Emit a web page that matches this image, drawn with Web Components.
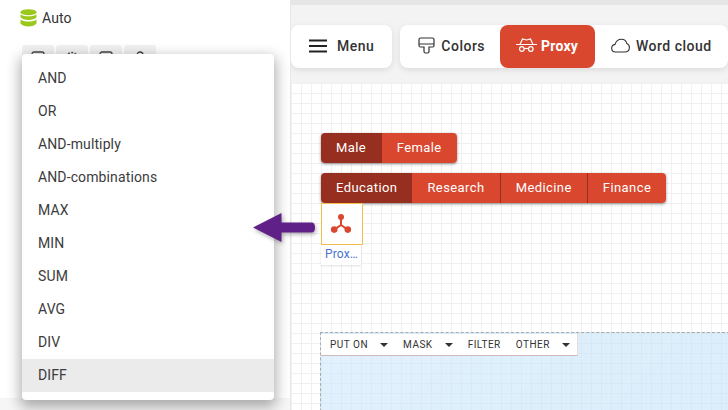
<!DOCTYPE html>
<html>
<head>
<meta charset="utf-8">
<style>
    html, body { margin: 0; padding: 0; width: 728px; height: 410px; overflow: hidden; background: #fff; }
    body { font-family: Roboto, "Liberation Sans", sans-serif; }
    app-shell { width: 728px; height: 410px; }
</style>
</head>
<body>
<app-shell>
    <app-sidebar slot="side"></app-sidebar>
    <app-toolbar slot="top">
        <tool-card>
            <tool-button gap="9" pad="0 18px 2px 17px">
                <svg slot="icon" width="20" height="16" viewBox="0 0 20 16"><path d="M1 2.500h18M1 8h18M1 13.500h18" fill="none" stroke="#222" stroke-width="2"/></svg>
                Menu
            </tool-button>
        </tool-card>
        <tool-card>
            <tool-button gap="6" pad="0 15px 2px 18px">
                <svg slot="icon" width="17" height="17" viewBox="0 0 17 17"><path d="M1 2.500q0-1.500 1.500-1.500h12q1.500 0 1.500 1.500v6q0 1.500-1.500 1.500H11v4.500q0 1.500-1.500 1.500h-2q-1.500 0-1.500-1.500V10H2.500Q1 10 1 8.500zM1 7h15" fill="none" stroke="#333" stroke-width="1.200"/></svg>
                Colors
            </tool-button>
            <tool-button active gap="4" pad="0 17px 2px 16px">
                <svg slot="icon" width="21" height="18" viewBox="0 0 21 18"><path d="M0 7.500h21M4 7.500 6.500 2 10.500 3 14.500 2 17 7.500" fill="none" stroke="#fff" stroke-width="1.200"/><circle cx="5.800" cy="12" r="2.300" fill="none" stroke="#fff" stroke-width="1.200"/><circle cx="14.800" cy="12" r="2.300" fill="none" stroke="#fff" stroke-width="1.200"/><path d="M8.100 11.500h4.400" stroke="#fff" stroke-width="1.200"/></svg>
                Proxy
            </tool-button>
            <tool-button gap="6" pad="0 16px 2px">
                <svg slot="icon" width="19" height="15" viewBox="0 0 19 15"><path d="M4.500 14Q.7 14 .7 10.200 .7 7 4 6.400 5.500 1.200 10.500 1.200 15 1.200 15.800 5.500 18.400 6.500 18.400 9.500 18.400 14 13.500 14z" fill="none" stroke="#333" stroke-width="1.100"/></svg>
                Word cloud
            </tool-button>
        </tool-card>
    </app-toolbar>
    <app-canvas slot="main">
        <seg-group>
            <seg-item on wide>Male</seg-item>
            <seg-item wide>Female</seg-item>
        </seg-group>
        <seg-group>
            <seg-item on>Education</seg-item>
            <seg-item>Research</seg-item>
            <seg-item line>Medicine</seg-item>
            <seg-item line>Finance</seg-item>
        </seg-group>
        <proxy-node>Prox…</proxy-node>
        <drop-zone>
            <zone-tab arrow>PUT ON</zone-tab>
            <zone-tab arrow>MASK</zone-tab>
            <zone-tab>FILTER</zone-tab>
            <zone-tab arrow>OTHER</zone-tab>
        </drop-zone>
    </app-canvas>
    <pop-menu slot="over">
        <menu-row>AND</menu-row>
        <menu-row>OR</menu-row>
        <menu-row>AND-multiply</menu-row>
        <menu-row>AND-combinations</menu-row>
        <menu-row>MAX</menu-row>
        <menu-row>MIN</menu-row>
        <menu-row>SUM</menu-row>
        <menu-row>AVG</menu-row>
        <menu-row>DIV</menu-row>
        <menu-row hover>DIFF</menu-row>
    </pop-menu>
    <svg slot="over" style="position:absolute;left:252px;top:212px;filter:drop-shadow(1px 2px 2px rgba(0,0,0,.3))" width="64" height="31" viewBox="0 0 64 31">
        <path d="M1 15.500 29.500 1V10.500H59.500Q63 10.500 63 15.500T59.500 20.500H29.500V30z" fill="#5f2088"/>
    </svg>
</app-shell>

<script>
    class AppShell extends HTMLElement {
        constructor() {
            super();
            this.attachShadow({ mode: 'open' }).innerHTML = `
                <style>
                    :host { display: flex; position: relative; overflow: hidden; }
                    .side { flex: 0 0 291px; }
                    .right { flex: 1; min-width: 0; display: flex; flex-direction: column; background: #f3f3f3; }
                </style>
                <div class="side"><slot name="side"></slot></div>
                <div class="right">
                    <slot name="top"></slot>
                    <slot name="main"></slot>
                </div>
                <slot name="over"></slot>
            `;
        }
    }

    class AppSidebar extends HTMLElement {
        constructor() {
            super();
            this.attachShadow({ mode: 'open' }).innerHTML = `
                <style>
                    :host { display: flex; flex-direction: column; height: 410px; background: #fff; border-right: 1px solid #e8e8e8; box-sizing: border-box; font-size: 14px; color: #333; }
                    .auto { display: flex; align-items: center; gap: 5px; padding: 6px 0 0 20px; height: 24px; letter-spacing: .1px; }
                    .btns { display: flex; gap: 2px; padding: 15px 0 0 22px; }
                    .btns span { width: 32px; height: 32px; background: #f1f1f1; border-radius: 3px; display: flex; justify-content: center; padding-top: 6px; box-sizing: border-box; }
                    .foot { margin-top: auto; height: 12px; background: #f6f6f6; }
                </style>
                <div class="auto">
                    <svg width="17" height="18" viewBox="0 0 17 18" fill="#9bc81c">
                        <ellipse cx="8.500" cy="3.200" rx="8" ry="3"/>
                        <path d="M.5 5.300Q3 7.300 8.500 7.300T16.500 5.300V8.300Q14 11 8.500 11T.5 8.300z"/>
                        <path d="M.5 10.500Q3 12.500 8.500 12.500T16.500 10.500V14.500Q14 17.500 8.500 17.500T.5 14.500z"/>
                    </svg>
                    <span>Auto</span>
                </div>
                <div class="btns">
                    <span><svg width="14" height="14"><rect x="1" y="1" width="12" height="12" rx="2" fill="none" stroke="#444" stroke-width="1.300"/></svg></span>
                    <span><svg width="14" height="14"><circle cx="7" cy="7" r="5.500" fill="none" stroke="#444" stroke-width="1.300" stroke-dasharray="2 1.500"/></svg></span>
                    <span><svg width="14" height="14"><rect x="1" y="1" width="12" height="12" rx="2" fill="none" stroke="#444" stroke-width="1.300"/></svg></span>
                    <span><svg width="14" height="14"><circle cx="7" cy="4" r="3" fill="none" stroke="#444" stroke-width="1.300"/></svg></span>
                </div>
                <div class="foot"></div>
            `;
        }
    }

    class AppToolbar extends HTMLElement {
        constructor() {
            super();
            this.attachShadow({ mode: 'open' }).innerHTML = `
                <style>
                    :host { display: flex; flex: 0 0 auto; box-sizing: border-box; height: 83px; gap: 8px; padding-top: 20px; border-top: 5px solid #e6e6e6; overflow: hidden; }
                </style>
                <slot></slot>
            `;
        }
    }

    class ToolCard extends HTMLElement {
        constructor() {
            super();
            this.attachShadow({ mode: 'open' }).innerHTML = `
                <style>
                    :host { display: flex; flex: 0 0 auto; height: 43px; background: #fff; border-radius: 8px; box-shadow: 0 2px 6px rgba(0,0,0,.1); }
                </style>
                <slot></slot>
            `;
        }
    }

    class ToolButton extends HTMLElement {
        constructor() {
            super();
            this.attachShadow({ mode: 'open' }).innerHTML = `
                <style>
                    :host { display: flex; align-items: center; font-size: 14px; font-weight: 500; letter-spacing: .5px; color: #333; white-space: nowrap; border-radius: 8px; box-sizing: border-box; }
                    :host([active]) { background: #d9472f; color: #fff; font-weight: 700; letter-spacing: .2px; }
                    ::slotted(svg) { display: block; }
                </style>
                <slot name="icon"></slot><slot></slot>
            `;
            this.style.padding = this.getAttribute('pad');
            this.style.gap = `${this.getAttribute('gap')}px`;
        }
    }

    class AppCanvas extends HTMLElement {
        constructor() {
            super();
            this.attachShadow({ mode: 'open' }).innerHTML = `
                <style>
                    :host {
                        display: flex; flex-direction: column; align-items: flex-start; flex: 1; min-height: 0;
                        box-sizing: border-box; padding: 50px 0 0 30px; gap: 10px; overflow: hidden;
                        background-color: #fff;
                        background-image: linear-gradient(#f0f0f0 1px, transparent 1px), linear-gradient(90deg, #f0f0f0 1px, transparent 1px);
                        background-size: 10px 10px;
                    }
                </style>
                <slot></slot>
            `;
        }
    }

    class SegGroup extends HTMLElement {
        constructor() {
            super();
            this.attachShadow({ mode: 'open' }).innerHTML = `
                <style>
                    :host { display: flex; height: 30px; border-radius: 4px; overflow: hidden; box-shadow: 0 1px 3px rgba(0,0,0,.45); flex: 0 0 auto; }
                </style>
                <slot></slot>
            `;
        }
    }

    class SegItem extends HTMLElement {
        constructor() {
            super();
            this.attachShadow({ mode: 'open' }).innerHTML = `
                <style>
                    :host { display: flex; align-items: center; padding: 0 15px 2px; font-size: 13px; font-weight: 400; letter-spacing: .42px; color: #fff; background: #d9472f; box-sizing: border-box; }
                    :host([on]) { background: #972f20; }
                    :host([line]) { border-left: 1px solid #972f20; }
                    :host([wide]) { padding-right: 15.500px; }
                </style>
                <slot></slot>
            `;
        }
    }

    class ProxyNode extends HTMLElement {
        constructor() {
            super();
            this.attachShadow({ mode: 'open' }).innerHTML = `
                <style>
                    :host { display: flex; flex-direction: column; flex: 0 0 auto; margin-top: -10px; }
                    .box { width: 42px; height: 42px; box-sizing: border-box; padding-right: 2px; background: #fff; border: 1px solid #f3c04f; display: flex; align-items: center; justify-content: center; }
                    .label { width: 40px; height: 20px; box-sizing: border-box; padding-left: 1px; background: #fff; box-shadow: 0 1px 2px rgba(0,0,0,.12); color: #4a72d0; font-size: 12px; font-weight: 400; letter-spacing: .2px; line-height: 18px; text-align: center; white-space: nowrap; }
                </style>
                <div class="box">
                    <svg width="22" height="22" viewBox="0 0 22 22">
                        <path d="M11 4v8M11 12 4.200 16.600M11 12 17.800 16.600" stroke="#d9472f" stroke-width="2" fill="none"/>
                        <circle cx="11" cy="4" r="3" fill="#d9472f"/>
                        <circle cx="4.200" cy="16.600" r="3.300" fill="#d9472f"/>
                        <circle cx="17.800" cy="16.600" r="3.300" fill="#d9472f"/>
                    </svg>
                </div>
                <div class="label"><slot></slot></div>
            `;
        }
    }

    class DropZone extends HTMLElement {
        constructor() {
            super();
            this.attachShadow({ mode: 'open' }).innerHTML = `
                <style>
                    :host { display: block; flex: 0 0 auto; box-sizing: border-box; width: 420px; height: 100px; margin: 57px 0 0 -1px; border: 1px dashed #aaa; border-right: 0; background: linear-gradient(135deg, rgba(205,232,252,.6), rgba(198,226,248,.62)); }
                    .tabs { display: inline-flex; align-items: center; height: 21px; padding: 0 7px 0 9px; background: #fff; border-bottom: 1px solid #d2b9b9; border-right: 1px solid #e5dddd; }
                </style>
                <div class="tabs"><slot></slot></div>
            `;
        }
    }

    class ZoneTab extends HTMLElement {
        constructor() {
            super();
            this.attachShadow({ mode: 'open' }).innerHTML = `
                <style>
                    :host { display: flex; align-items: center; font-size: 10px; font-weight: 400; letter-spacing: .5px; color: #333; margin-right: 15px; white-space: nowrap; }
                    :host(:last-child) { margin-right: 0; }
                    i { display: none; width: 0; height: 0; margin-left: 12px; border: 4px solid transparent; border-top: 4px solid #333; border-bottom: 0; }
                    :host([arrow]) i { display: block; }
                </style>
                <slot></slot><i></i>
            `;
        }
    }

    class PopMenu extends HTMLElement {
        constructor() {
            super();
            this.attachShadow({ mode: 'open' }).innerHTML = `
                <style>
                    :host { display: block; position: absolute; left: 22px; top: 54px; width: 252px; box-sizing: border-box; padding: 8px 0; background: #fff; border-radius: 4px; box-shadow: 0 5px 14px 2px rgba(0,0,0,.32); }
                </style>
                <slot></slot>
            `;
        }
    }

    class MenuRow extends HTMLElement {
        constructor() {
            super();
            this.attachShadow({ mode: 'open' }).innerHTML = `
                <style>
                    :host { display: flex; align-items: center; height: 33px; box-sizing: border-box; padding: 0 0 2px 16px; font-size: 14px; letter-spacing: .12px; color: #3c3c3c; }
                    :host([hover]) { background: #ebebeb; }
                </style>
                <slot></slot>
            `;
        }
    }

    customElements.define('app-shell', AppShell);
    customElements.define('app-sidebar', AppSidebar);
    customElements.define('app-toolbar', AppToolbar);
    customElements.define('tool-card', ToolCard);
    customElements.define('tool-button', ToolButton);
    customElements.define('app-canvas', AppCanvas);
    customElements.define('seg-group', SegGroup);
    customElements.define('seg-item', SegItem);
    customElements.define('proxy-node', ProxyNode);
    customElements.define('drop-zone', DropZone);
    customElements.define('zone-tab', ZoneTab);
    customElements.define('pop-menu', PopMenu);
    customElements.define('menu-row', MenuRow);
</script>
</body>
</html>
